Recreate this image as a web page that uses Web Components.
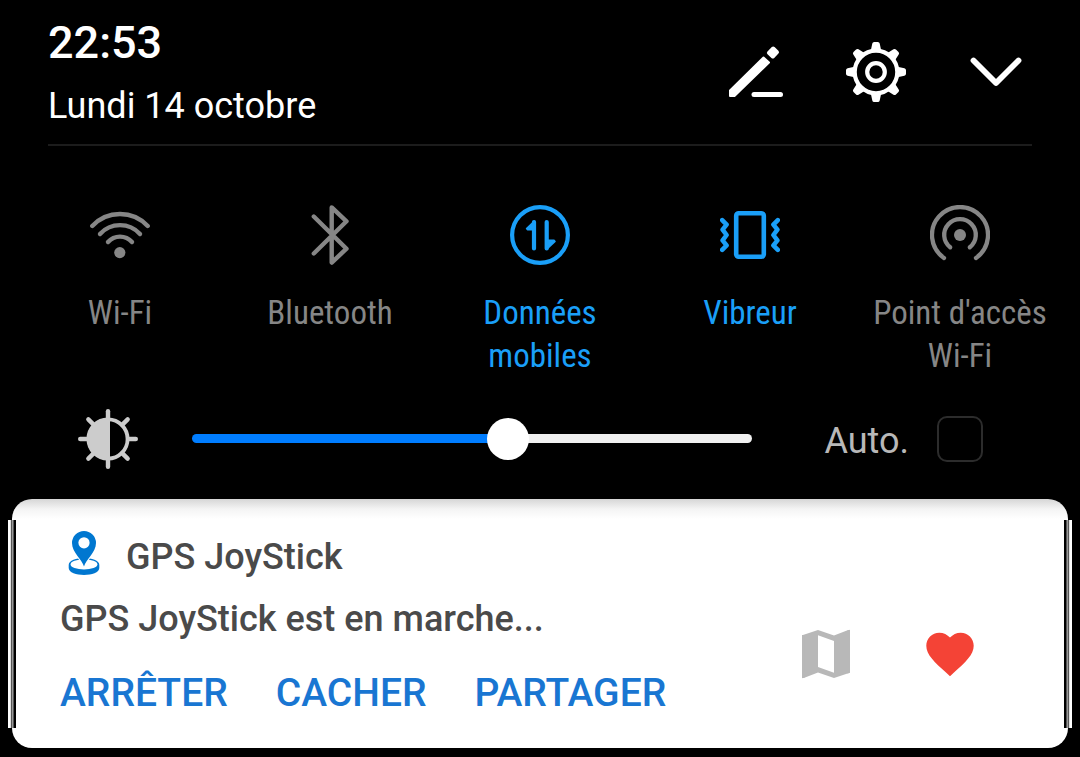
<!DOCTYPE html>
<html lang="fr">
<head>
<meta charset="utf-8">
<meta name="viewport" content="width=device-width, initial-scale=1">
<title>Panneau de notifications</title>
<style>
  html { background: #000; }
  body { margin: 0; background: #000; font-family: Roboto, "Noto Sans", sans-serif; }
</style>
</head>
<body>
<notification-shade>
  <shade-header slot="header" time="22:53" date="Lundi 14 octobre">
    <icon-button label="Modifier"><shade-icon name="edit"></shade-icon></icon-button>
    <icon-button label="Paramètres"><shade-icon name="settings"></shade-icon></icon-button>
    <icon-button label="Développer"><shade-icon name="chevron"></shade-icon></icon-button>
  </shade-header>
  <quick-tile slot="tiles" icon="wifi">Wi-Fi</quick-tile>
  <quick-tile slot="tiles" icon="bluetooth">Bluetooth</quick-tile>
  <quick-tile slot="tiles" icon="data" active>Données mobiles</quick-tile>
  <quick-tile slot="tiles" icon="vibrate" active>Vibreur</quick-tile>
  <quick-tile slot="tiles" icon="hotspot">Point d'accès Wi-Fi</quick-tile>
  <brightness-control slot="brightness" value="57">Auto.</brightness-control>
  <notification-card slot="notifications">
    <shade-icon slot="icon" name="pin"></shade-icon>
    <span slot="app">GPS JoyStick</span>
    <span slot="text">GPS JoyStick est en marche...</span>
    <text-button slot="actions">ARRÊTER</text-button>
    <text-button slot="actions">CACHER</text-button>
    <text-button slot="actions">PARTAGER</text-button>
    <icon-button slot="tools" label="Carte"><shade-icon name="map"></shade-icon></icon-button>
    <icon-button slot="tools" label="Favori"><shade-icon name="heart"></shade-icon></icon-button>
  </notification-card>
</notification-shade>

<script>
const rays = (shape) => [0, 45, 90, 135, 180, 225, 270, 315]
  .map((a) => `<g transform="rotate(${a} 30 30)">${shape}</g>`).join('');

const ICONS = {
  edit: [60, `<g fill="currentColor" stroke="currentColor" stroke-linejoin="round" stroke-width="2">
      <path d="M4 54V48.5L37.5 15.5L43 20.5L8.5 54Z"/>
      <path stroke-width="4" d="M42.9 10.8L47.2 6.5L51 10.2L46.8 14.5Z"/></g>
      <path d="M28 52.5H54.5" stroke="currentColor" stroke-width="5" stroke-linecap="round"/>`],
  settings: [60, `<g fill="none" stroke="currentColor" stroke-width="4.2"><circle cx="30" cy="30" r="21.3"/><circle cx="30" cy="30" r="8.8"/></g>
      <g fill="currentColor">${rays('<path d="M24.8 8.5L26.3 1.6Q26.6 0 28.2 0H31.8Q33.4 0 33.7 1.6L35.2 8.5Z"/>')}</g>`],
  chevron: [60, `<path d="M7.5 18.5L30 41L52.5 18.5" fill="none" stroke="currentColor" stroke-width="5.8" stroke-linecap="round" stroke-linejoin="round"/>`],
  wifi: [60, `<g fill="none" stroke="currentColor" stroke-width="4.4" stroke-linecap="round"><path d="M2.3 21A38 38 0 0 1 57.7 21"/><path d="M10 29A27 27 0 0 1 50 29"/><path d="M18 37A16 16 0 0 1 42 37"/></g><circle cx="29.8" cy="47.6" r="5.6" fill="currentColor"/>`],
  bluetooth: [60, `<path d="M13.8 11.5L46.5 43.7L31.7 57.6V2.4L46.5 16.3L13.8 48.5" fill="none" stroke="currentColor" stroke-width="4.4" stroke-linecap="round" stroke-linejoin="round"/>`],
  data: [60, `<g fill="none" stroke="currentColor" stroke-width="4.2" stroke-linecap="round"><circle cx="30" cy="30" r="27.9"/><path d="M24 17V43.4M36.7 17V43.4"/></g>
      <path d="M16.6 23.6L24.5 16.2V24.6H17.4ZM45 36.4L37 43.8V35.4H44.2Z" fill="currentColor" stroke="currentColor" stroke-width="1.6" stroke-linejoin="round"/>`],
  vibrate: [60, `<g fill="none" stroke="currentColor" stroke-width="4.6" stroke-linecap="round" stroke-linejoin="round"><rect x="16.2" y="8.2" width="27.6" height="43.6" rx="2.5" stroke-width="4.6"/>
      <path d="M2.2 15.2L6.6 19.6L2.6 24.6L6.6 30L2.6 35.4L6.6 40.4L2.2 44.8"/><path d="M57.8 15.2L53.4 19.6L57.4 24.6L53.4 30L57.4 35.4L53.4 40.4L57.8 44.8"/></g>`],
  hotspot: [60, `<g fill="none" stroke="currentColor" stroke-width="4.3" stroke-linecap="round"><path d="M14 53A28 28 0 1 1 46 53"/><path d="M20.2 42.3A15.8 15.8 0 1 1 39.8 42.3"/></g><circle cx="30" cy="30" r="6" fill="currentColor"/>`],
  brightness: [60, `<circle cx="30" cy="30" r="19.6" fill="none" stroke="currentColor" stroke-width="3.8"/><path d="M32 9V51H30A21 21 0 0 1 30 9Z" fill="currentColor"/>
      <g stroke="currentColor" stroke-width="4.4" stroke-linecap="round">${rays('<path d="M30 2.2V10"/>')}</g>`],
  pin: [48, `<path d="M8.7 36C8.7 26.7 39.3 26.7 39.3 36V39C39.3 48.2 8.7 48.2 8.7 39Z" fill="currentColor"/><ellipse cx="24" cy="35.4" rx="13.4" ry="5" fill="#fff"/>
      <path d="M24 37.6C22.2 30.5 12 23.5 12 14A12 12 0 0 1 36 14C36 23.5 25.8 30.5 24 37.6Z" fill="currentColor" stroke="#fff" stroke-width="2" paint-order="stroke"/><circle cx="24" cy="13.8" r="5.6" fill="#fff"/>`],
  map: [24, `<path d="M20.5 3l-.16.03L15 5.1 9 3 3.36 4.9 3 5.38V20.5l.5.5.16-.03L9 18.9l6 2.1 5.64-1.9.36-.48V3.5zM15 19l-6-2.11V5l6 2.11z" fill="currentColor"/><path d="M3 4.9H4V20.8L3 21.1ZM20 3.2L21 2.9V19L20 19.3Z" fill="currentColor"/>`],
  heart: [27, `<path transform="translate(1.5 1.5)" d="M12 21.35l-1.45-1.32C5.4 15.36 2 12.28 2 8.5 2 5.42 4.42 3 7.5 3c1.74 0 3.41.81 4.5 2.09C13.09 3.81 14.76 3 16.5 3 19.58 3 22 5.42 22 8.5c0 3.78-3.4 6.86-8.55 11.54z" fill="currentColor"/>`],
};

class Base extends HTMLElement {
  connectedCallback() {
    if (this.shadowRoot) return;
    this.attachShadow({ mode: 'open' }).innerHTML =
      `<style>*{box-sizing:border-box}button{appearance:none;border:0;margin:0;padding:0;background:none;color:inherit;font:inherit;cursor:pointer}</style>` + this.render();
  }
}

customElements.define('shade-icon', class extends Base {
  render() {
    const [size, body] = ICONS[this.getAttribute('name')];
    return `<style>:host{display:block;width:var(--icon-size,60px);height:var(--icon-size,60px);flex:none}svg{display:block;width:100%;height:100%}</style>
      <svg viewBox="0 0 ${size} ${size}" aria-hidden="true">${body}</svg>`;
  }
});

customElements.define('icon-button', class extends Base {
  render() {
    return `<style>:host{display:block;flex:none}button{display:block}</style>
      <button type="button" aria-label="${this.getAttribute('label')}"><slot></slot></button>`;
  }
});

customElements.define('text-button', class extends Base {
  render() {
    return `<style>:host{display:block}button{display:block;font-size:39px;line-height:48px;font-weight:500;color:#1976d2;white-space:nowrap}</style>
      <button type="button"><slot></slot></button>`;
  }
});

customElements.define('shade-header', class extends Base {
  render() {
    return `<style>
      :host{display:block;padding:0 48px;color:#fff}
      header{display:flex;align-items:center;justify-content:space-between;padding:16px 6px 16px 0;border-bottom:2px solid #1c1c1c}
      .time{font-size:45px;line-height:54px;font-weight:500}
      .date{font-size:36px;line-height:44px;margin-top:14px}
      nav{display:flex;gap:60px}
      </style>
      <header><div><div class="time">${this.getAttribute('time')}</div><div class="date">${this.getAttribute('date')}</div></div>
      <nav><slot></slot></nav></header>`;
  }
});

customElements.define('quick-tile', class extends Base {
  render() {
    const on = this.hasAttribute('active');
    return `<style>
      :host{display:block;color:#868686}
      :host([active]){color:#1a9ff8}
      button{display:flex;flex-direction:column;align-items:center;gap:26px;width:100%;text-align:center;font-family:"Roboto Condensed","Liberation Sans Narrow",Roboto,sans-serif;font-size:33px;line-height:43px}
      </style>
      <button type="button" aria-pressed="${on}"><shade-icon name="${this.getAttribute('icon')}"></shade-icon><span><slot></slot></span></button>`;
  }
});

customElements.define('brightness-control', class extends Base {
  render() {
    return `<style>
      :host{display:flex;align-items:center;padding:0 97px 0 78px;color:#ccc}
      input{appearance:none;margin:0;background:none}
      .range{flex:1;min-width:0;height:42px;margin:0 72px 2px 54px}
      .range::-webkit-slider-runnable-track{height:9px;border-radius:5px;background:linear-gradient(90deg,#007dff var(--fill),#f0f0f0 var(--fill))}
      .range::-webkit-slider-thumb{appearance:none;width:42px;height:42px;margin-top:-16px;border-radius:50%;background:#fff}
      label{display:flex;align-items:center;gap:28px;font-size:36px;line-height:44px;color:#b8b8b8}
      .name{padding-top:4px}
      .check{width:46px;height:46px;border:2px solid #2c2c2c;border-radius:10px}
      .check:checked{background:#007dff}
      </style>
      <shade-icon name="brightness"></shade-icon>
      <input class="range" type="range" min="0" max="100" value="${this.getAttribute('value')}" aria-label="Luminosité">
      <label><span class="name"><slot></slot></span><input class="check" type="checkbox"></label>`;
  }
  connectedCallback() {
    super.connectedCallback();
    const range = this.shadowRoot.querySelector('.range');
    const paint = () => range.style.setProperty('--fill', `${range.value}%`);
    range.addEventListener('input', paint);
    paint();
  }
});

customElements.define('notification-card', class extends Base {
  render() {
    return `<style>
      :host{display:block;padding:0 12px}
      article{position:relative;display:flex;align-items:flex-end;justify-content:space-between;padding:30px 86px 31px 48px;border-radius:20px;background:linear-gradient(#d6d6d6,#f4f4f4 10px,#fff 20px);color:#4a4a4a;font-size:36px;line-height:48px;font-weight:500}
      article::before,article::after{content:"";position:absolute;top:21px;bottom:20px;width:8px;background:linear-gradient(90deg,#fff 2px,#ddd 2px 3px,#555 3px 4px,#999 4px 5px,#555 5px 6px,#000 6px)}
      article::before{left:-4px}
      article::after{right:-4px;transform:scaleX(-1)}
      .app{display:flex;align-items:flex-start;gap:18px;--icon-size:48px}
      .name{padding-top:4px}
      ::slotted([slot=icon]){color:#0077d0}
      .text{margin-top:14px}
      .actions{display:flex;gap:48px;margin-top:26px}
      .tools{display:flex;gap:60px;margin-bottom:31px;--icon-size:64px;color:#b8b8b8}
      ::slotted([slot=tools]:last-child){color:#f44336}
      </style>
      <article>
        <div><div class="app"><slot name="icon"></slot><div class="name"><slot name="app"></slot></div></div>
        <div class="text"><slot name="text"></slot></div>
        <div class="actions"><slot name="actions"></slot></div></div>
        <div class="tools"><slot name="tools"></slot></div>
      </article>`;
  }
});

customElements.define('notification-shade', class extends Base {
  render() {
    return `<style>
      :host{display:block;padding-bottom:9px}
      .tiles{display:grid;grid-template-columns:repeat(5,minmax(0,1fr));padding:59px 15px 0}
      .brightness{padding:32px 0 30px}
      </style>
      <slot name="header"></slot>
      <div class="tiles"><slot name="tiles"></slot></div>
      <div class="brightness"><slot name="brightness"></slot></div>
      <slot name="notifications"></slot>`;
  }
});
</script>
</body>
</html>
